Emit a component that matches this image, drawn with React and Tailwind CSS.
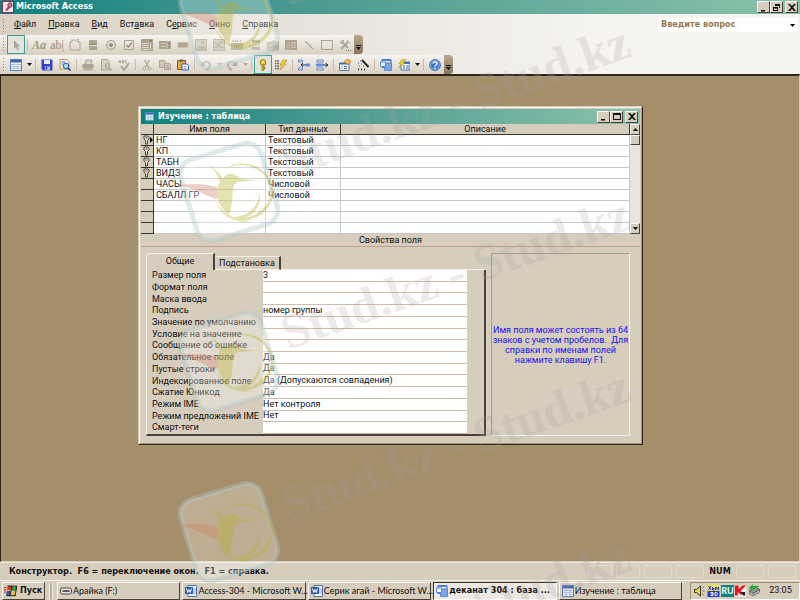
import React from 'react';

const G = '#afa491';

const icons = {
    access: <><rect x="0.5" y="0.5" width="11" height="11" fill="#f4e4ea" stroke="#8c2f52" /><path d="M3 9l5-6 2 2-5 5z" fill="#b04a70" /><circle cx="8" cy="4" r="2.2" fill="#d07a98" stroke="#8c2f52" /></>,
    pointer: <path d="M4 1v9l2-2 1.500 3.500 1.500-.8L7.500 7.500H10z" fill={G} />,
    frame: <><path d="M1 3v8h10V3M1 3h2M9 3h2" fill="none" stroke={G} /><path d="M2.500 .5l1.500 2M4 .5l-1.500 2M5 .5l1 1 1-1M6 1.500v1M8 .5h1.500L8 2.500h1.500" stroke="#978c79" strokeWidth=".7" fill="none" /></>,
    toggle: <><rect x="2" y="1" width="8" height="4" fill={G} /><rect x="2" y="7" width="8" height="4" fill={G} /><path d="M2 5.500h8" stroke="#8f8472" /></>,
    radio: <><circle cx="6" cy="6" r="4.300" fill="none" stroke={G} strokeWidth="1.300" /><circle cx="6" cy="6" r="2" fill="#978c79" /></>,
    check: <><rect x="1.500" y="1.500" width="9" height="9" fill="none" stroke={G} /><path d="M3.500 6l2 2L9 3.500" fill="none" stroke="#978c79" strokeWidth="1.400" /></>,
    combo: <><path d="M0 0h12v12H0z" fill={G} /><path d="M1 4.500h7M1 6.500h7M1 8.500h7M1 10.500h7M9.500 4v7" stroke="#ded7ca" /><path d="M8 1h3L9.500 3z" fill="#7c715f" /></>,
    list: <><path d="M0 2h12v8H0z" fill={G} /><path d="M2 4.500h4M2 7.500h4M8 3v6" stroke="#d5ccbd" /><path d="M9 5l1-1 1 1M9 7l1 1 1-1" stroke="#7c715f" strokeWidth=".7" fill="none" /></>,
    button: <path d="M1 3.500h10v5H1z" fill={G} stroke="#c9bfae" />,
    image: <><rect x="0.5" y="0.5" width="11" height="11" fill="#c9c0b0" stroke={G} /><path d="M1 10l4-4 2 2 2-2 2 3v2H1z" fill={G} /><circle cx="8" cy="3.500" r="1" fill="#978c79" /></>,
    bound: <><rect x="0.5" y="0.5" width="11" height="11" fill="#c9c0b0" stroke={G} /><path d="M2 4l3 2 4-4M2 9l4-2 4 2" fill="none" stroke="#978c79" /></>,
    unbound: <><path d="M0 4h12v7H0z" fill={G} /><path d="M1 1l2 2M4 1l1 2M7 1L6 3M10 1L9 3M3 6h6M3 8h6" stroke="#978c79" /></>,
    pageBreak: <><path d="M3 1h8v3H3zM3 8h8v3H3z" fill={G} /><path d="M3 6h8" stroke={G} strokeDasharray="2 1" /><path d="M0 4l2.500 2L0 8z" fill={G} /></>,
    tabs: <><path d="M0.500 3.500h4l1-1.500h3v1.500h3v7.500h-11z" fill="#c9c0b0" stroke={G} /><path d="M2 9.500l6-5 2.500 2v3z" fill={G} /></>,
    subform: <><path d="M0 1h12v10H0z" fill={G} /><path d="M2 4h3M2 6.500h3M2 9h3M7 3.500h3v5H7z" stroke="#d9d1c3" fill="none" strokeWidth=".8" /></>,
    line: <path d="M2 2l8 8" stroke={G} strokeWidth="1.200" />,
    rect: <rect x="0.500" y="1.500" width="11" height="9" fill="none" stroke={G} />,
    tools: <><path d="M2 10l7-7M3 3l6 6" stroke={G} strokeWidth="1.800" /><path d="M1 3l3-2 1 2-2 2zM8 1l1 2 2 1" stroke={G} fill="none" /><path d="M7 11.500h1M9 11.500h1M11 11.500h1" stroke="#897d69" /></>,
    table: <><rect x="0.500" y="0.500" width="11" height="11" fill="#fff" stroke="#5b7fb8" /><path d="M1 1h10v2.500H1z" fill="#3a63b0" /><path d="M1 5.500h10M1 7.500h10M1 9.500h10M4 3v8M8 3v8" stroke="#9bb3d8" strokeWidth=".8" /></>,
    save: <><path d="M0.500 0.500h11v11H2L.5 10z" fill="#3644c4" /><path d="M3 1h6v4H3z" fill="#e8ecfb" /><path d="M4 7.500h5V11H4z" fill="#b9c3ee" /><path d="M5 8h1.200v2.500H5z" fill="#2530a0" /></>,
    search: <><path d="M1 .5h7l2 2V10H1z" fill="#eaf1fb" stroke="#c08030" strokeWidth=".8" /><path d="M2.500 3h4M2.500 5h2" stroke="#4c75b8" /><circle cx="7" cy="7" r="2.700" fill="#a9dcf5" stroke="#2b5e96" /><path d="M9 9l2.500 2.500" stroke="#2b4f80" strokeWidth="1.600" /></>,
    print: <><path d="M3 5l1-4h6L9 5" fill="#d8d0c2" stroke={G} /><path d="M0.500 5h11v4h-11z" fill={G} /><path d="M2 9h8v2H2z" fill="#c6bcab" stroke={G} /></>,
    preview: <><path d="M1.500 .5h5.500l2 2V11H1.500z" fill="#d8d0c2" stroke={G} /><circle cx="7.500" cy="7" r="2.400" fill="#cfc6b6" stroke={G} /><path d="M9 9l2.500 2.500" stroke={G} strokeWidth="1.600" /></>,
    spell: <><path d="M1 4l1-3 1 3M1.300 3h1.400M4.500 1v3h1.300V1zM9 1.500H7.500V4H9" fill="none" stroke={G} strokeWidth=".9" /><path d="M3 7l3 4 5-7" fill="none" stroke={G} strokeWidth="1.800" /></>,
    cut: <><path d="M3.500 1L7.500 8M8.500 1L4.500 8" stroke={G} strokeWidth="1.300" /><circle cx="3.500" cy="9.500" r="1.500" fill="none" stroke={G} /><circle cx="8.500" cy="9.500" r="1.500" fill="none" stroke={G} /></>,
    copy: <><path d="M0.500 1.500h5l1 1v6h-6z" fill="#cfc6b6" stroke={G} /><path d="M5.500 4.500h5l1 1v5h-6z" fill="#cfc6b6" stroke={G} /><path d="M7 7h3M7 9h3" stroke={G} /></>,
    paste: <><rect x="0.500" y="1.500" width="8" height="9" fill="#e0a93c" stroke="#8c6420" /><path d="M3 .5h3v2H3z" fill="#555" /><path d="M5 5h5l1.500 1.500V11H5z" fill="#fff" stroke="#3c5fa8" /><path d="M6.500 7.500h3M6.500 9.500h3" stroke="#6a8ac8" strokeWidth=".8" /></>,
    undo: <><path d="M3 5c3-4 8-2 7 2-.5 2-2 3-4 4" fill="none" stroke={G} strokeWidth="1.500" /><path d="M1 2v5h5z" fill={G} /></>,
    redo: <><path d="M9 5C6 1 1 3 2 7c.5 2 2 3 4 4" fill="none" stroke={G} strokeWidth="1.500" /><path d="M11 2v5H6z" fill={G} /></>,
    key: <><circle cx="6" cy="3.500" r="2.900" fill="#f5c83a" stroke="#7a6410" strokeWidth=".8" /><path d="M5 6h2v5.500H5zM7 8h1v1.500H7z" fill="#d8a81c" stroke="#7a6410" strokeWidth=".5" /><circle cx="6" cy="3" r=".8" fill="#fff8d0" /></>,
    indexes: <><path d="M0 2h4M0 4.500h4M0 7h4M0 9.500h4" stroke="#6f675c" strokeWidth="1.300" strokeDasharray="1 .6 3 0" /><path d="M8 1h4L9 5h2l-6 6 2-5H5z" fill="#f6cf3c" stroke="#a8821c" strokeWidth=".6" /></>,
    insertRow: <><path d="M0.500 1h4v2h-4zM0.500 9h4v2h-4z" fill="#fff" stroke="#5878b0" strokeWidth=".9" /><path d="M8 4.500h4v3H8z" fill="#5f8de0" /><path d="M3 6h5M5 4L3 6l2 2" fill="none" stroke="#1c2a48" /></>,
    deleteRow: <><path d="M1 1h6v2H1zM1 9h6v2H1z" fill="#fff" stroke="#5878b0" strokeWidth=".9" /><path d="M0 4.500h7v3H0z" fill="#5f8de0" /><path d="M7 6h5M9.500 4L12 6l-2.500 2" fill="none" stroke="#1c2a48" /></>,
    properties: <><path d="M0.500 4h9.500v7.500H.5z" fill="#f4f6fb" stroke="#5a6f98" /><path d="M1 4h9v1.500H1z" fill="#3e64ac" /><path d="M2.500 7.500h1M5 7.500h3M2.500 9.500h1M5 9.500h3" stroke="#3e64ac" /><path d="M5 3l3-3 4 2-2 3-3-.5z" fill="#f1bf55" stroke="#9a6e1c" strokeWidth=".6" /></>,
    build: <><path d="M5 1l6.500 7" stroke="#2a2630" strokeWidth="2" /><path d="M1 4h1M3 2h1M2 7h1M4 5h1M6 7h1" stroke="#3550c8" strokeWidth="1.200" /><path d="M1 10.500h1M4 10.500h1M7 10.500h1" stroke="#111" strokeWidth="1.400" /></>,
    database: <><path d="M2 .5h9v8H2z" fill="#dce8fb" stroke="#3d6ac2" /><path d="M4.500 4h7v7.500h-7z" fill="#7da4e8" stroke="#4f7cd0" strokeWidth=".8" /><path d="M0.500 3h5v4.500h-5z" fill="#f4f8ff" stroke="#5b88d8" /><path d="M2 .5h9V2H2z" fill="#5b88d8" /></>,
    newObject: <><path d="M3 3h9v8H3z" fill="#eef3fc" stroke="#4a72b8" /><path d="M3 3h9v2H3z" fill="#4a72b8" /><path d="M5 7h2M8 7h3M5 9h2M8 9h3" stroke="#4a72b8" /><path d="M4 0h4L5 4h2L1 9l2-4H1z" fill="#f8cf3c" stroke="#a8821c" strokeWidth=".5" /></>,
    help: <><circle cx="6" cy="6" r="5.400" fill="#3f78d8" stroke="#2450a4" strokeWidth=".8" /><circle cx="6" cy="6" r="4.500" fill="none" stroke="#bcd2f4" strokeWidth=".6" /><path d="M4 4.500C4 2.500 8 2.500 8 4.500 8 6 6 6 6 7.500M6 8.500V10" fill="none" stroke="#fff" strokeWidth="1.300" /></>,
    windows: <><path d="M3 2c2-1 2.500-.5 3.500 0L5.800 5.500C5 5 4 5 2.500 5.500z" fill="#e03a20" /><path d="M7 2.300c1.500.7 2.500.4 4-.3l-.7 3.500c-1.500.7-2.500.5-4 .1z" fill="#2f9e34" /><path d="M2.400 6.200c1.500-.6 2.500-.6 3.300-.1L5 9.600c-1-.5-2-.5-3.300.2z" fill="#2a50c0" /><path d="M6.200 6.400c1.500.5 2.500.5 4-.1l-.7 3.500c-1.500.6-2.500.5-4 0z" fill="#f0c020" /><path d="M7 1.500L5 10.500M11 2L9.500 10M3 1.800h8M2 10h8" stroke="#111" strokeWidth=".8" fill="none" /><path d="M0 3h2M0 5h2M0 7h1.500" stroke="#c03020" /></>,
    drive: <><rect x="0.500" y="3" width="11" height="6" rx="2" fill="#e9e7e4" stroke="#4a4744" /><path d="M2.500 6h7" stroke="#222" strokeWidth="1.400" /></>,
    word: <><path d="M3 .5h8.500v11H3z" fill="#fff" stroke="#4a70b8" /><path d="M8 4h3M8 6h3M8 8h3" stroke="#7a98d0" /><rect x="0" y="2" width="8" height="7" fill="#2f5cb0" /><path d="M1.500 3.500L2.700 7.500 4 4.500 5.300 7.500 6.500 3.500" fill="none" stroke="#fff" /></>,
    speaker: <><path d="M1 4.500h2L7 1v10L3 7.500H1z" fill="#e8d848" stroke="#3a3620" /><path d="M9 3l1.500-1M9 6h2M9 9l1.500 1" stroke="#77705c" /></>,
    xear: <><path d="M0 0h12v6H0z" fill="#f2e43a" /><path d="M0 6h12v6H0z" fill="#2a3cc8" /><path d="M1 1l2.500 4M3.500 1L1 5M5 3.500h2M5 2v3h2M8 5V2.500h1.500V5M11 5V2" stroke="#2838a8" fill="none" /><path d="M3 7.500h2.500v3H3M3 9h2.500M7.500 7.500v3h1.500l1-1.500-1-1.500z" stroke="#fff" fill="none" strokeWidth=".9" /></>,
    kaspersky: <><rect width="12" height="12" fill="#f4eeea" /><path d="M0 0h4v4l4-4h4L6 6l3 3-3 1-3-3v4H0z" fill="#e8141c" /><path d="M6 7h5v4H9z" fill="#1c1c1c" /></>,
    eject: <><path d="M2 6l6-3 3 2-6 4z" fill="#8f9a90" stroke="#333" strokeWidth=".6" /><path d="M2 6v3l3 2 6-3.500V5L5 9z" fill="#c8ccc4" stroke="#333" strokeWidth=".6" /><path d="M1 4l4-4v2c3-.5 5-.3 6 .5-2 0-4 .5-6 1.500V6z" fill="#25a83a" /></>,
};

function Icon({ name, className = 'h-3 w-3' }) {
    return <svg viewBox="0 0 12 12" className={`${className} shrink-0`} aria-hidden="true">{icons[name]}</svg>;
}

function Drop({ dim }) {
    return (
        <button aria-label="▾" className="flex w-2 items-center justify-center">
            <svg viewBox="0 0 5 3" className="h-[3px] w-[5px]"><path d="M0 0h5L2.500 3z" fill={dim ? G : '#111'} /></svg>
        </button>
    );
}

function Separator() {
    return <div className="mx-0.5 my-1 w-px shrink-0 bg-[#c4b9a6]" />;
}

function Grip() {
    return (
        <div className="flex w-[7px] flex-col items-center justify-center gap-0.5">
            {[0, 1, 2, 3, 4].map((i) => <span key={i} className="size-px bg-[#8e8069]" />)}
        </div>
    );
}

function Toolbar({ items, label }) {
    return (
        <div role="toolbar" aria-label={label} className="flex h-[19px] w-fit rounded-r-sm bg-linear-to-b from-[#f6f4f0] to-[#d9d0c1]">
            <Grip />
            {items.map((item, i) => {
                if (item === '|') return <Separator key={i} />;
                if (item === 'v') return <Drop key={i} />;
                if (item === 'vd') return <Drop key={i} dim />;
                const on = item === 'pointer' || item === 'key';
                return (
                    <button key={i} aria-label={item} className={`flex w-[18px] items-center justify-center ${on ? 'border border-[#3f9d94] bg-[#dfe5dc]' : ''}`}>
                        {item === 'Aa' && <span className="font-['Liberation_Serif',serif] text-[12px] font-bold italic text-[#a4987f]">Aa</span>}
                        {item === 'ab|' && <span className="font-['Liberation_Serif',serif] text-[12px] text-[#978c79]">ab|</span>}
                        {icons[item] && <Icon name={item} />}
                    </button>
                );
            })}
            <div className="flex w-[9px] items-end justify-center rounded-r-sm bg-linear-to-b from-[#b9a98b] to-[#87745a] pb-1">
                <svg viewBox="0 0 5 5" className="size-[5px]"><path d="M0 0h5v1H0zM0 2h5L2.500 5z" fill="#111" /></svg>
            </div>
        </div>
    );
}

const raised = 'border border-t-[#fbf9f5] border-l-[#fbf9f5] border-r-[#4a4238] border-b-[#4a4238]';

function CaptionButtons({ middle }) {
    const paths = {
        min: 'M2 7h4v1.500H2z',
        restore: 'M3 1h5v4H7V3H3zM1 4h5v4H1zM2 5.500V7h3V5.500z',
        max: 'M1 1h8v7H1zM2 3v4h6V3z',
        close: 'M1 1h2l2 2 2-2h2L6 4.500 9 8H7L5 6 3 8H1l3-3.500z',
    };
    return (
        <div className="flex">
            {['min', middle, 'close'].map((p) => (
                <button key={p} aria-label={p} className={`flex h-3 w-[13px] items-center justify-center bg-[#d6cdbd] ${raised} ${p === 'close' ? 'ml-0.5' : ''}`}>
                    <svg viewBox="0 0 10 9" className="h-[9px] w-[10px]"><path d={paths[p]} fillRule="evenodd" fill="#111" /></svg>
                </button>
            ))}
        </div>
    );
}

const menus = [['', 'Ф', 'айл'], ['', 'П', 'равка'], ['', 'В', 'ид'], ['Вст', 'а', 'вка'], ['С', 'е', 'рвис'], ['', 'О', 'кно'], ['', 'С', 'правка']];

const formTools = ['pointer', '|', 'Aa', 'ab|', 'frame', 'toggle', 'radio', 'check', 'combo', 'list', 'button', 'image', 'bound', 'unbound', 'pageBreak', 'tabs', 'subform', 'line', 'rect', 'tools'];

const designTools = ['table', 'v', '|', 'save', 'search', '|', 'print', 'preview', 'spell', '|', 'cut', 'copy', 'paste', '|', 'undo', 'vd', 'redo', 'vd', '|', 'key', 'indexes', '|', 'insertRow', 'deleteRow', '|', 'properties', 'build', '|', 'database', 'newObject', 'v', '|', 'help'];

const fields = [
    ['НГ', 'Текстовый', true],
    ['КП', 'Текстовый', true],
    ['ТАБН', 'Текстовый', true],
    ['ВИДЗ', 'Текстовый', true],
    ['ЧАСЫ', 'Числовой'],
    ['СБАЛЛ ГР', 'Числовой'],
    ['', ''],
    ['', ''],
    ['', ''],
];

const properties = [
    ['Размер поля', '3'],
    ['Формат поля', ''],
    ['Маска ввода', ''],
    ['Подпись', 'номер группы'],
    ['Значение по умолчанию', ''],
    ['Условие на значение', ''],
    ['Сообщение об ошибке', ''],
    ['Обязательное поле', 'Да'],
    ['Пустые строки', 'Да'],
    ['Индексированное поле', 'Да (Допускаются совпадения)'],
    ['Сжатие Юникод', 'Да'],
    ['Режим IME', 'Нет контроля'],
    ['Режим предложений IME', 'Нет'],
    ['Смарт-теги', ''],
];

function FieldGrid() {
    const head = 'border-r border-b border-[#3b352c] p-0 text-center font-normal';
    const cell = 'border-r border-b border-[#c3c8c8] bg-white p-0 pl-0.5';
    return (
        <div className="flex">
            <table className="flex-1 table-fixed border-separate border-spacing-0 leading-[10px]">
                <colgroup>
                    <col className="w-[13px]" />
                    <col className="w-[112px]" />
                    <col className="w-[75px]" />
                    <col />
                </colgroup>
                <thead>
                    <tr className="h-[11px]">
                        <th className={head} />
                        <th className={head}>Имя поля</th>
                        <th className={head}>Тип данных</th>
                        <th className={head}>Описание</th>
                    </tr>
                </thead>
                <tbody>
                    {fields.map(([name, type, key], i) => (
                        <tr key={i} className="h-[11px]">
                            <td className="border-r border-b border-[#3b352c] p-0">
                                <svg viewBox="0 0 12 10" className="block h-[10px] w-3">
                                    {key && <path d="M3 1h4l1 1v2L6.500 5.500V9h-2V5.500L3 4V2zM4.500 3h2" fill="#e8e0d0" stroke="#3a352e" strokeWidth=".9" />}
                                    {i === 0 && <path d="M9 2l3 3-3 3z" fill="#000" />}
                                </svg>
                            </td>
                            <td className={cell}>{name}</td>
                            <td className={cell}>{type}</td>
                            <td className={cell} />
                        </tr>
                    ))}
                </tbody>
            </table>
            <div className="flex w-[10px] flex-col bg-[#e9e5dc]">
                <button aria-label="▲" className={`flex h-[11px] items-center justify-center bg-[#d6cdbd] ${raised}`}>
                    <svg viewBox="0 0 5 3" className="h-[3px] w-[5px]"><path d="M0 3h5L2.500 0z" /></svg>
                </button>
                <div className={`h-[10px] bg-[#d6cdbd] ${raised}`} />
                <button aria-label="▼" className={`mt-auto flex h-[11px] items-center justify-center bg-[#d6cdbd] ${raised}`}>
                    <svg viewBox="0 0 5 3" className="h-[3px] w-[5px]"><path d="M0 0h5L2.500 3z" /></svg>
                </button>
            </div>
        </div>
    );
}

function FieldProperties() {
    return (
        <div className="flex gap-[5px] pt-[6px] pr-[10px] pb-[6px] pl-[5px]">
            <div className="flex w-[340px] shrink-0 flex-col">
                <div role="tablist" className="flex h-[17px] items-end">
                    <button role="tab" aria-selected="true" className="h-[17px] w-[69px] rounded-tl-sm border-t border-r-2 border-l border-t-[#f4f0e8] border-r-[#4a4238] border-l-[#f4f0e8]">Общие</button>
                    <button role="tab" aria-selected="false" className="h-[14px] w-[66px] border-t border-r-2 border-b border-t-[#f4f0e8] border-r-[#4a4238] border-b-[#f4f0e8]">Подстановка</button>
                    <div className="flex-1 self-stretch border-b border-[#f4f0e8]" />
                </div>
                <div className="flex-1 border-r-2 border-b-2 border-l border-r-[#4a4238] border-b-[#4a4238] border-l-[#f4f0e8] pr-[17px] pl-[5px]">
                    <div className="flex h-[164px] flex-col">
                        {properties.map(([name, value], i) => (
                            <div key={name} className="flex min-h-0 flex-1 items-stretch">
                                <label htmlFor={`prop-${i}`} className="flex w-[111px] items-center whitespace-nowrap">{name}</label>
                                <input id={`prop-${i}`} defaultValue={value} className="min-w-0 flex-1 border-b border-[#cdbdaa] bg-white outline-none" />
                            </div>
                        ))}
                    </div>
                </div>
            </div>
            <div className="flex min-w-0 flex-1 items-center justify-center border border-t-[#a99d86] border-r-[#f4f0e8] border-b-[#f4f0e8] border-l-[#a99d86] text-center leading-[10px] whitespace-pre text-[#1616f0]">
                {'Имя поля может состоять из 64\nзнаков с учетом пробелов.  Для\nсправки по именам полей\nнажмите клавишу F1.'}
            </div>
        </div>
    );
}

function TableWindow() {
    return (
        <section className="absolute top-[30px] left-[137px] w-[505px] border border-t-[#d6cdbd] border-r-[#30291f] border-b-[#30291f] border-l-[#d6cdbd] bg-[#d6cdbd] font-['Roboto',sans-serif]">
            <div className="border border-t-[#f8f5ef] border-r-[#a09279] border-b-[#a09279] border-l-[#f8f5ef] p-px">
                <header className="flex h-[15px] items-center bg-linear-to-r from-[#0a8280] to-[#8ac2ab] pr-0.5 pl-1 text-white">
                    <Icon name="table" className="h-[9px] w-[9px]" />
                    <h1 className="ml-1 flex-1 font-['DejaVu_Sans_Condensed','DejaVu_Sans',sans-serif] text-[9px] font-bold">Изучение : таблица</h1>
                    <CaptionButtons middle="max" />
                </header>
                <FieldGrid />
                <div className="border-b border-[#c29d8a] text-center leading-[12px]">Свойства поля</div>
                <FieldProperties />
            </div>
        </section>
    );
}

const tasks = [
    ['drive', 'Арайка (F:)'],
    ['word', 'Access-304 - Microsoft W...'],
    ['word', 'Серик агай - Microsoft W...'],
    ['database', 'деканат 304 : база ...', true],
    ['table', 'Изучение : таблица'],
];

function Taskbar() {
    return (
        <footer className="flex h-5 items-center border-t border-[#f4f0e8] bg-[#d6cdbd] pl-0.5 font-['Lato','Roboto',sans-serif] text-[9px]">
            <button className={`flex h-[18px] w-[43px] items-center gap-0.5 pl-px font-['DejaVu_Sans_Condensed',sans-serif] font-bold ${raised}`}>
                <Icon name="windows" className="h-[14px] w-[14px]" />
                Пуск
            </button>
            <div className="mx-1 h-4 w-1 border-x border-[#f4f0e8] bg-[#b8ad99]" />
            <div className="flex min-w-0 flex-1 gap-0.5">
                {tasks.map(([icon, title, active]) => (
                    <button
                        key={title}
                        className={active
                            ? "flex h-[18px] min-w-0 flex-1 items-center gap-px border border-t-[#3b352c] border-r-white border-b-white border-l-[#3b352c] bg-[#eeeae3] pl-0.5 font-['DejaVu_Sans_Condensed',sans-serif] font-bold whitespace-nowrap"
                            : `flex h-[18px] min-w-0 flex-1 items-center gap-px pl-0.5 whitespace-nowrap ${raised}`}
                    >
                        <Icon name={icon} />
                        {title}
                    </button>
                ))}
            </div>
            <div className="ml-2 flex h-[18px] w-[110px] items-center gap-px border border-t-[#a09279] border-r-white border-b-white border-l-[#a09279] pl-0.5">
                <Icon name="speaker" className="h-3 w-[13px]" />
                <Icon name="xear" className="h-3 w-[13px]" />
                <span className="flex h-3 w-[13px] items-center justify-center bg-[#0a8280] font-bold text-white">RU</span>
                <Icon name="kaspersky" className="h-3 w-[11px]" />
                <Icon name="eject" className="h-[13px] w-[14px]" />
                <time className="mx-auto font-['Roboto',sans-serif]">23:05</time>
            </div>
        </footer>
    );
}

function StatusBar() {
    const box = 'h-[13px] border border-[#e3dccf]';
    return (
        <div className="flex h-[18px] items-center gap-1 border-t border-[#f0ebe2] bg-[#d6cdbd] pr-1 pl-[9px] font-bold">
            <span className="flex-1 whitespace-pre">Конструктор.  F6 = переключение окон.  F1 = справка.</span>
            <span className={`${box} w-6`} />
            <span className={`${box} w-6`} />
            <span className={`${box} w-7`} />
            <span className={`${box} w-7`} />
            <span className="w-6 text-center">NUM</span>
            <span className={`${box} w-7`} />
            <span className={`${box} w-7`} />
        </div>
    );
}

function Badge({ y }) {
    return (
        <g transform={`translate(229 ${y})`}>
            <rect x="-42" y="-42" width="84" height="84" rx="15" transform="rotate(-17)" fill="#fff" fillOpacity=".28" stroke="#b0c8c8" strokeOpacity=".38" strokeWidth="5" />
            <g opacity=".36" fill="#b8b02c">
                <path d="M-22-29C-14-23-8-17-6-13-4-17-1-19 4-18 8-17 9-14 12-13L28-11.500 9-10C4-8 4-3 3.500 3 3 12 2 18 0 23-6 18-12 10-12 2-12-4-11-7-9-10-12-18-16-24-22-29z" />
                <path d="M-50-7C-36-9-22-8-12-5L-12 7C-20 6-34-4-50-7z" fill="#d08060" />
                <path d="M-8-20C10-38 44-26 44 0 44 26 10 38-8 20 12 34 40 22 42 0 42-22 12-36-8-20z" />
                <path d="M-13 10C-8 24 8 32 22 29 10 30-4 24-13 10zM3 25C18 25 29 16 31 0 33 18 20 30 3 25zM10 28C22 28 31 21 33 13 31 24 22 31 10 28z" />
            </g>
        </g>
    );
}

function Watermark() {
    return (
        <svg className="pointer-events-none absolute inset-0 h-full w-full" aria-hidden="true">
            {[20, 192, 362, 532].map((y) => <Badge key={y} y={y} />)}
            {[6, 178, 350, 522, 692].map((y) => (
                <text key={y} transform={`translate(288 ${y}) rotate(-19.500)`} fill="#a8a0a4" fillOpacity=".22" className="font-['Liberation_Serif',serif] text-[50px] font-bold">
                    Stud.kz - Stud.kz
                </text>
            ))}
        </svg>
    );
}

export default function App() {
    return (
        <div className="relative flex min-h-screen flex-col overflow-hidden bg-[#d6cdbd] font-['DejaVu_Sans_Condensed','DejaVu_Sans',sans-serif] text-[9px] text-[#111]">
            <header className="flex h-[14px] items-center bg-linear-to-r from-[#0a8280] to-[#8ac2ab] pr-0.5 pl-0.5 text-white">
                <Icon name="access" />
                <span className="ml-0.5 flex-1 font-bold">Microsoft Access</span>
                <CaptionButtons middle="restore" />
            </header>
            <div className="flex flex-col gap-px bg-linear-to-r from-[#d9d1c3] to-[#f5f4f1] to-75% pt-0.5">
                <div className="flex h-[18px] items-center">
                    <Grip />
                    <nav className="flex gap-3 pl-[7px] font-['Roboto',sans-serif]">
                        {menus.map(([a, b, c]) => (
                            <button key={a + b + c}>{a}<u>{b}</u>{c}</button>
                        ))}
                    </nav>
                    <div className="relative mr-0.5 ml-auto h-[14px] w-[140px]">
                        <select aria-label="Введите вопрос" className="block h-full w-full appearance-none bg-white pl-[3px] font-bold text-[#957a4c]">
                            <option>Введите вопрос</option>
                        </select>
                        <svg viewBox="0 0 5 3" className="pointer-events-none absolute top-[6px] right-[3px] h-[3px] w-[5px]"><path d="M0 0h5L2.500 3z" /></svg>
                    </div>
                </div>
                <Toolbar items={formTools} label="Панель элементов" />
                <Toolbar items={designTools} label="Конструктор таблиц" />
            </div>
            <main className="relative flex-1 border border-t-2 border-[#2e261c] border-r-[#d6cdbd] border-b-[#d6cdbd] bg-[#a58e6a]">
                <TableWindow />
            </main>
            <StatusBar />
            <Taskbar />
            <Watermark />
        </div>
    );
}
